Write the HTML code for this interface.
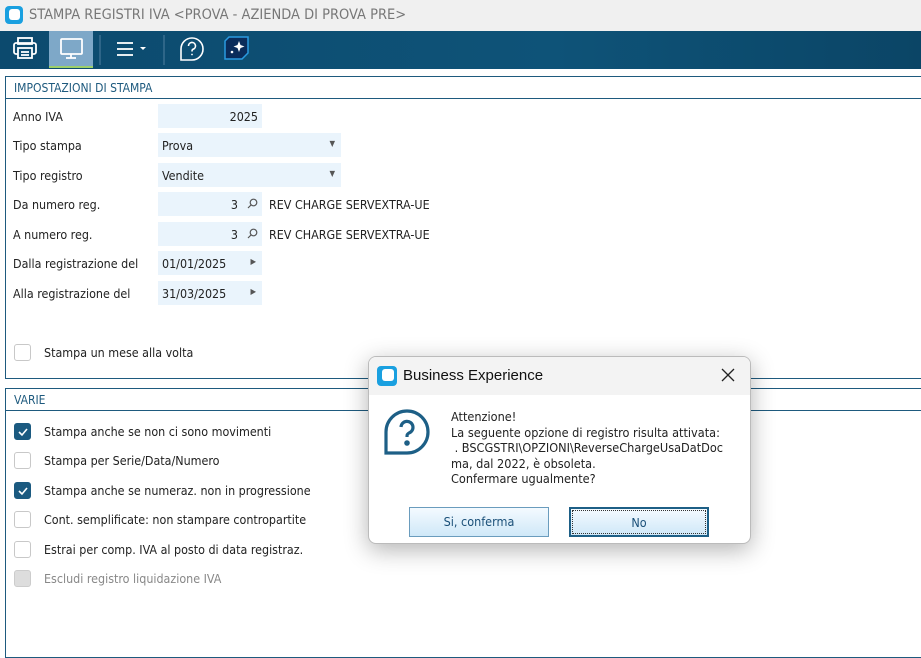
<!DOCTYPE html>
<html><head><meta charset="utf-8"><style>
*{box-sizing:border-box;margin:0;padding:0}
body{width:921px;height:641px;overflow:hidden;background:#fff;font-family:"DejaVu Sans Condensed","Liberation Sans",sans-serif;font-size:12.4px;color:#222;position:relative}
.abs{position:absolute}
.title{left:0;top:0;width:921px;height:31px;background:#f0f0f0}
.tb{left:0;top:31px;width:921px;height:38px;background:linear-gradient(90deg,#0c4a6e,#0e5378 60%,#0b4566)}
.panel{border:1px solid #1e5a7e;border-right:none;left:5px;width:916px}
.hdr{height:22px;border-bottom:1px solid #1e5a7e;color:#1e5a7e;padding:4px 0 0 8px;font-size:12px}
.lbl{left:13px}
.inp{background:#eaf4fc;height:24px;left:158px}
.cb{width:17px;height:17px;border:1px solid #c8c8c8;border-radius:3px;left:14px;background:#fff}
.cb.on{background:#1b5a80;border-color:#1b5a80}
.btn{height:30px;top:507px;background:linear-gradient(#f4faff,#cfe8f8);border:1px solid #6a9cbd;color:#1a4f78;text-align:center;line-height:28px;font-size:12.5px}
.mag{left:247px}
</style></head><body>
<div class="abs title"></div>
<svg class="abs" style="left:4px;top:5px" width="20" height="20"><rect x="1" y="1" width="18" height="18" rx="4" fill="#1aa0e0"/><rect x="5" y="4" width="11" height="11" rx="3" fill="#fff"/></svg>
<div class="abs" style="left:29px;top:7px;font-size:14.5px;color:#777">STAMPA REGISTRI IVA &lt;PROVA - AZIENDA DI PROVA PRE&gt;</div>
<div class="abs tb"></div>
<div class="abs" style="left:49px;top:31px;width:44px;height:37px;background:#7ea8c8;border-bottom:2px solid #9ccf6a"></div>
<svg class="abs" style="left:0;top:31px" width="260" height="38" fill="none" stroke="#fff" stroke-width="1.8">
<rect x="18" y="7" width="14" height="6"/><rect x="14" y="12" width="22" height="11" rx="2"/><rect x="18" y="17" width="14" height="10" fill="#0d4d72"/><line x1="21" y1="21" x2="29" y2="21"/><line x1="21" y1="24" x2="29" y2="24"/>
<rect x="61" y="8" width="21" height="15" rx="1"/><line x1="71" y1="23" x2="71" y2="27"/><line x1="66" y1="27" x2="76" y2="27"/>
<line x1="100" y1="4" x2="100" y2="34" stroke="#4f7f9f" stroke-width="1"/>
<line x1="117" y1="12" x2="133" y2="12"/><line x1="117" y1="18" x2="133" y2="18"/><line x1="117" y1="24" x2="133" y2="24"/>
<path d="M140 16l6 0-3 3z" fill="#fff" stroke="none"/>
<line x1="164" y1="4" x2="164" y2="34" stroke="#4f7f9f" stroke-width="1"/>
<path d="M192 29H181V18A11 11 0 1 1 192 29z" stroke-width="1.6"/><path d="M188.5 15a3.5 3.5 0 1 1 4.5 3.3c-1 .4-1 1-1 2.2" stroke-width="1.6"/><circle cx="192" cy="23.5" r="0.9" fill="#fff" stroke="none"/>
<path d="M229 6h19v16l-6 6h-17v-18z" fill="#0a2c5a" stroke="#2a9ae0" stroke-width="1.5"/>
<path d="M239 10l1.5 4 4 1.5-4 1.5-1.5 4-1.5-4-4-1.5 4-1.5z" fill="#fff" stroke="none"/><circle cx="232" cy="21" r="1.3" fill="#fff" stroke="none"/>
</svg>

<div class="abs panel" style="top:76px;height:303px"><div class="hdr">IMPOSTAZIONI DI STAMPA</div></div>
<div class="abs lbl" style="top:109px">Anno IVA</div><div class="abs inp" style="top:104px;width:104px;text-align:right;padding:5px 4px 0 0">2025</div>
<div class="abs lbl" style="top:138px">Tipo stampa</div><div class="abs inp" style="top:133px;width:183px;padding:5px 4px">Prova<span class="abs" style="right:6px;top:6px;font-size:8px;color:#555">▼</span></div>
<div class="abs lbl" style="top:168px">Tipo registro</div><div class="abs inp" style="top:163px;width:183px;padding:5px 4px">Vendite<span class="abs" style="right:6px;top:6px;font-size:8px;color:#555">▼</span></div>
<div class="abs lbl" style="top:197px">Da numero reg.</div><div class="abs inp" style="top:192px;width:104px;text-align:right;padding:5px 24px 0 0">3</div><svg class="abs mag" style="top:198px" width="11" height="11" fill="none" stroke="#555" stroke-width="1.2"><circle cx="6.5" cy="4.5" r="3.3"/><line x1="4" y1="7" x2="1" y2="10"/></svg><div class="abs" style="left:269px;top:197px">REV CHARGE SERVEXTRA-UE</div>
<div class="abs lbl" style="top:227px">A numero reg.</div><div class="abs inp" style="top:222px;width:104px;text-align:right;padding:5px 24px 0 0">3</div><svg class="abs mag" style="top:228px" width="11" height="11" fill="none" stroke="#555" stroke-width="1.2"><circle cx="6.5" cy="4.5" r="3.3"/><line x1="4" y1="7" x2="1" y2="10"/></svg><div class="abs" style="left:269px;top:227px">REV CHARGE SERVEXTRA-UE</div>
<div class="abs lbl" style="top:256px">Dalla registrazione del</div><div class="abs inp" style="top:251px;width:104px;padding:5px 4px">01/01/2025<span class="abs" style="right:6px;top:6px;font-size:8px;color:#555">▶</span></div>
<div class="abs lbl" style="top:286px">Alla registrazione del</div><div class="abs inp" style="top:281px;width:104px;padding:5px 4px">31/03/2025<span class="abs" style="right:6px;top:6px;font-size:8px;color:#555">▶</span></div>
<div class="abs cb" style="top:344px"></div><div class="abs" style="left:44px;top:345px">Stampa un mese alla volta</div>

<div class="abs panel" style="top:388px;height:270px"><div class="hdr">VARIE</div></div>
<div class="abs cb on" style="top:423px"><svg width="15" height="15"><path d="M4 8l3 3 5-6" fill="none" stroke="#fff" stroke-width="1.6"/></svg></div><div class="abs" style="left:44px;top:424px">Stampa anche se non ci sono movimenti</div>
<div class="abs cb" style="top:452px"></div><div class="abs" style="left:44px;top:453px">Stampa per Serie/Data/Numero</div>
<div class="abs cb on" style="top:482px"><svg width="15" height="15"><path d="M4 8l3 3 5-6" fill="none" stroke="#fff" stroke-width="1.6"/></svg></div><div class="abs" style="left:44px;top:483px">Stampa anche se numeraz. non in progressione</div>
<div class="abs cb" style="top:511px"></div><div class="abs" style="left:44px;top:512px">Cont. semplificate: non stampare contropartite</div>
<div class="abs cb" style="top:541px"></div><div class="abs" style="left:44px;top:542px">Estrai per comp. IVA al posto di data registraz.</div>
<div class="abs cb" style="top:570px;background:#ddd;border-color:#ccc"></div><div class="abs" style="left:44px;top:571px;color:#888">Escludi registro liquidazione IVA</div>

<div class="abs" style="left:368px;top:356px;width:383px;height:188px;background:#fff;border:1px solid #bbb;border-radius:8px;box-shadow:0 6px 24px rgba(0,0,0,.3);overflow:hidden">
<div style="height:38px;background:#f3f3f3"></div>
</div>
<svg class="abs" style="left:376px;top:365px" width="22" height="22"><rect x="1" y="1" width="20" height="20" rx="4" fill="#1aa0e0"/><rect x="6" y="4" width="12" height="12" rx="3" fill="#fff"/></svg>
<div class="abs" style="left:403px;top:367px;font-size:15px;color:#111;font-family:'Liberation Sans',sans-serif">Business Experience</div>
<svg class="abs" style="left:721px;top:368px" width="14" height="14"><path d="M1 1L13 13M13 1L1 13" stroke="#222" stroke-width="1.3"/></svg>
<svg class="abs" style="left:383px;top:408px" width="48" height="48" fill="none" stroke="#1d5f86" stroke-width="3.2"><path d="M24 45H3V24A21 21 0 1 1 24 45z"/><path d="M18 19a6 6 0 1 1 8 6c-2 1-2 2-2 4"/><circle cx="24" cy="35" r="1.2" fill="#1d5f86"/></svg>
<div class="abs" style="left:451px;top:409px;line-height:15.5px;font-size:12.6px">Attenzione!<br>La seguente opzione di registro risulta attivata:<br>&nbsp;. BSCGSTRI\OPZIONI\ReverseChargeUsaDatDoc<br>ma, dal 2022, è obsoleta.<br>Confermare ugualmente?</div>
<div class="abs btn" style="left:409px;width:140px">Si, conferma</div>
<div class="abs btn" style="left:569px;width:140px;border:2px solid #1d5f86;outline:1px dotted #333;outline-offset:-4px">No</div>
</body></html>
